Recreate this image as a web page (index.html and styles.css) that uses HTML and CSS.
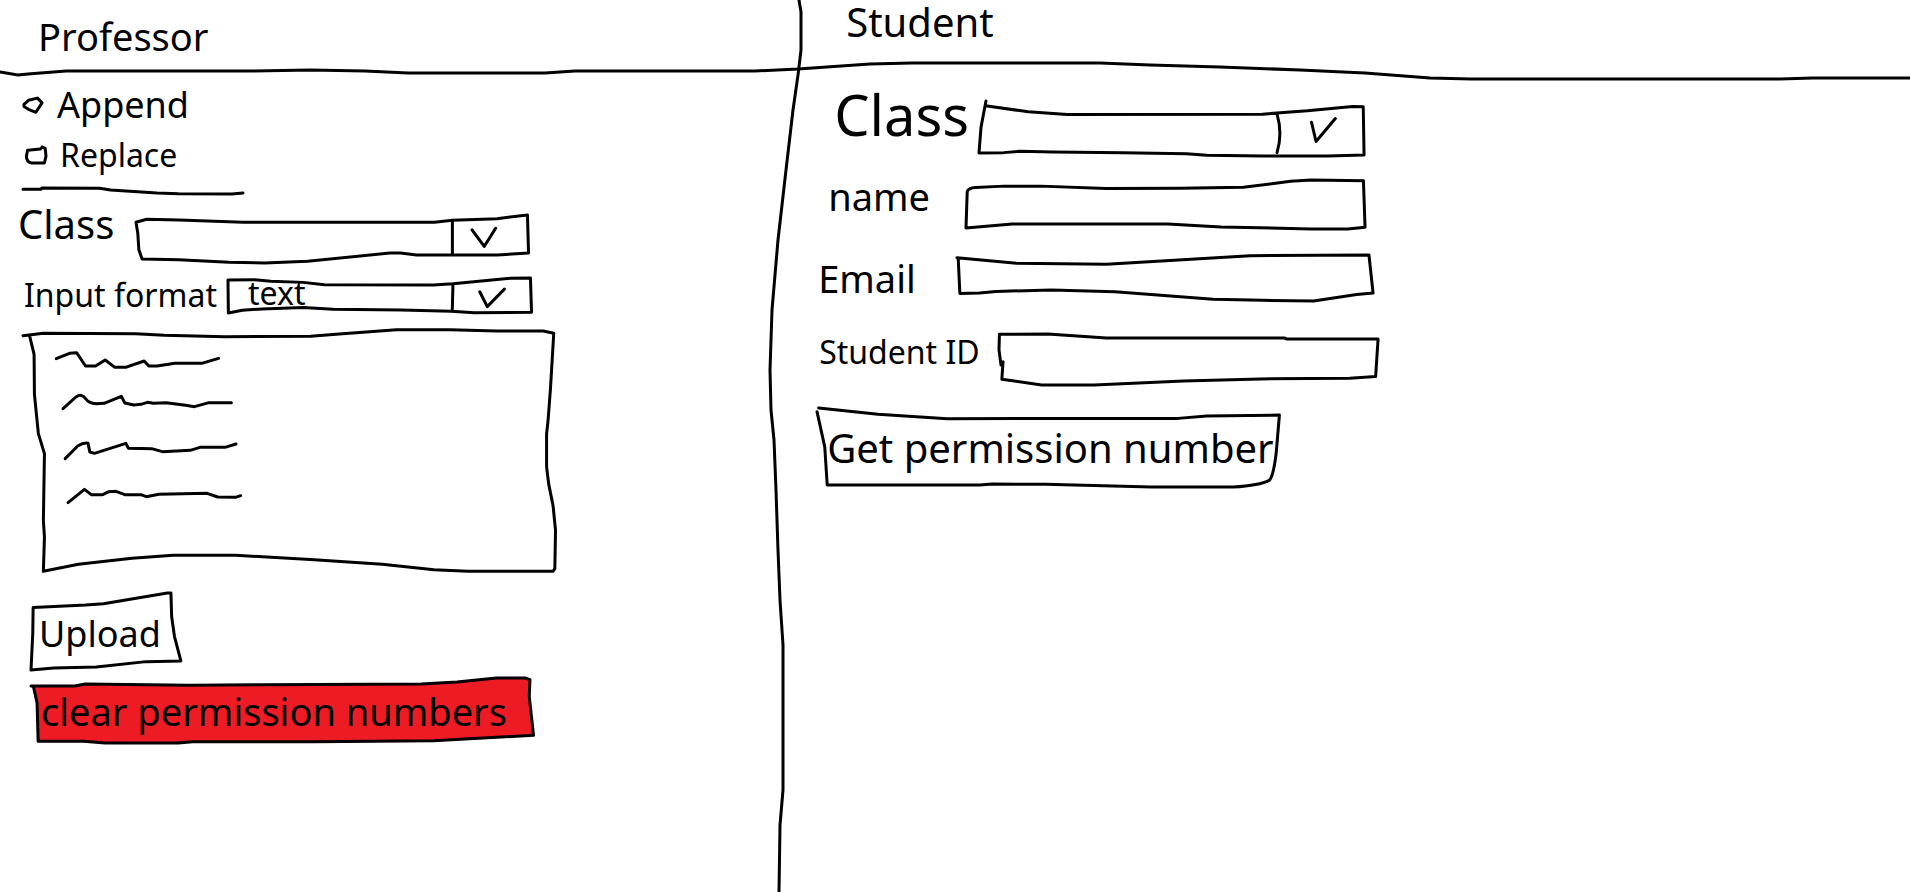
FILE: index.html
```html
<!DOCTYPE html>
<html lang="en">
<head>
<meta charset="utf-8">
<title>Permission numbers</title>
<link rel="stylesheet" href="styles.css">
</head>
<body>
<main class="board">
  <section class="panel">
    <header class="panel-head head-professor"><h1 class="title text-m">Professor</h1></header>
    <form class="form form-professor">
      <div class="choice choice-append">
        <span class="frame radio-frame">
          <input type="radio" name="mode" id="append" class="radio">
          <svg class="ink" viewBox="63 288 62 44" preserveAspectRatio="none" aria-hidden="true"><path d="M66 308 L80 297 L108 291 L122 304 L103 330 L80 322 L66 314Z"/></svg>
        </span>
        <label for="append" class="text-r">Append</label>
      </div>
      <div class="choice choice-replace">
        <span class="frame radio-frame">
          <input type="radio" name="mode" id="replace" class="radio">
          <svg class="ink" viewBox="76 424 50 46" preserveAspectRatio="none" aria-hidden="true"><path d="M112 430 L80 433 L77 450 Q77 468 90 470 L122 470 L126 450 L124 428 L116 424"/></svg>
        </span>
        <label for="replace" class="text-s">Replace</label>
      </div>
      <div class="frame separator">
        <svg class="ink" viewBox="65 565 616 18" preserveAspectRatio="none" aria-hidden="true"><path d="M65 569 L115 569 L118 565 L280 566 L310 571 L440 580 L500 582 L650 583 L681 580"/></svg>
      </div>
      <div class="row row-prof-class">
        <label for="prof-class" class="text-l">Class</label>
        <span class="frame field">
          <select id="prof-class" class="control"><option></option></select>
          <svg class="ink" viewBox="380 75 1098 145" preserveAspectRatio="none" aria-hidden="true"><path d="M380 97 L410 88 L500 90 L680 97 L1215 97 L1265 91 L1390 86 L1475 75 L1478 190 L1390 196 L1165 196 L1120 190 L1090 190 L860 215 L740 220 L640 218 L500 210 L397 208 L388 180 L385 130Z M1265 92 L1265 195 M1320 120 L1354 170 L1386 115"/></svg>
        </span>
      </div>
      <div class="row row-format">
        <label for="format" class="text-s">Input format</label>
        <span class="frame field">
          <select id="format" class="control text-s"><option>text</option></select>
          <svg class="ink" viewBox="640 262 850 104" preserveAspectRatio="none" aria-hidden="true"><path d="M640 268 L715 267 L760 272 L850 275 L910 282 L1215 283 L1270 279 L1430 263 L1487 262 L1490 364 L1330 365 L1265 361 L1125 357 L935 355 L850 350 L735 354 L680 358 L641 366Z M1270 280 L1268 361 M1345 303 L1366 347 L1414 295"/></svg>
        </span>
      </div>
      <div class="frame notes">
        <textarea class="control" aria-label="Permission numbers"></textarea>
        <svg class="ink" viewBox="65 414 1490 729" preserveAspectRatio="none" aria-hidden="true">
          <path d="M65 434 L122 427 L380 428 L460 433 L630 437 L870 436 L950 429 L1110 416 L1260 416 L1390 420 L1520 420 L1550 427 L1541 590 L1534 690 L1530 728 L1530 828 L1536 880 L1548 943 L1555 1018 L1553 1133 L1548 1141 L1310 1141 L1215 1136 L1070 1120 L880 1106 L660 1093 L485 1093 L370 1102 L220 1120 L122 1141 L125 1038 L122 988 L125 788 L108 728 L97 610 L96 490 L84 437"/>
          <path d="M158 503 L195 487 L215 485 L240 525 L268 525 L295 507 L322 529 L352 529 L404 510 L417 525 L440 525 L490 517 L565 517 L612 502"/>
          <path d="M177 653 L213 618 Q230 606 240 623 Q250 638 270 638 L292 637 L340 616 L350 636 L375 642 L395 640 L413 634 L430 637 L465 635 L520 643 L545 647 L585 635 L648 635"/>
          <path d="M183 803 L218 765 Q235 754 247 757 L252 783 L265 787 L353 757 L360 772 L425 773 L455 782 L533 778 L560 769 L630 769 L661 759"/>
          <path d="M191 935 L237 895 L256 911 L288 911 L305 902 L325 901 L350 911 L395 911 L410 917 L445 910 L580 907 L610 918 L660 919 L674 914"/>
        </svg>
      </div>
      <button type="button" class="frame button upload text-r">
        <svg class="ink" viewBox="86 70 422 230" preserveAspectRatio="none" aria-hidden="true"><path d="M92 113 L240 106 L290 102 L470 70 L480 70 L482 140 L490 200 L508 273 L410 275 L270 291 L150 294 L86 300 L91 190Z"/></svg>
        <span class="caption">Upload</span>
      </button>
      <button type="button" class="frame button clear text-m">
        <svg class="ink danger" viewBox="88 325 1406 195" preserveAspectRatio="none" aria-hidden="true"><path d="M88 349 L210 349 L240 343 L530 347 L735 345 L1180 343 L1280 337 L1390 325 L1470 325 L1484 330 L1482 380 L1494 497 L1215 513 L880 516 L540 516 L500 520 L295 520 L235 515 L108 515 L105 400 L95 352"/></svg>
        <span class="caption">clear permission numbers</span>
      </button>
    </form>
  </section>

  <section class="panel">
    <header class="panel-head head-student"><h2 class="title text-l">Student</h2></header>
    <form class="form form-student">
      <div class="row row-class">
        <label for="class" class="text-xl">Class</label>
        <span class="frame field">
          <select id="class" class="control"><option></option></select>
          <svg class="ink" viewBox="540 303 938 163" preserveAspectRatio="none" aria-hidden="true"><path d="M557 303 L545 380 L540 457 L600 456 L640 452 L720 454 L890 456 L1045 459 L1095 464 L1230 466 L1390 466 L1478 463 L1476 320 L1450 319 L1340 332 L1230 342 L755 343 L660 335 L560 318 M1266 341 Q1280 400 1266 456 M1350 366 L1361 423 L1408 355"/></svg>
        </span>
      </div>
      <div class="row row-name">
        <label for="name" class="text-m">name</label>
        <span class="frame field">
          <input type="text" id="name" class="control">
          <svg class="ink" viewBox="507 544 975 144" preserveAspectRatio="none" aria-hidden="true"><path d="M507 685 L510 578 Q513 567 530 566 L600 562 L690 562 L850 569 L1030 568 L1185 565 L1300 548 L1350 544 L1478 546 L1482 683 L1440 688 L1350 688 L1130 682 L1000 673 L620 673Z"/></svg>
        </span>
      </div>
      <div class="row row-email">
        <label for="email" class="text-m">Email</label>
        <span class="frame field">
          <input type="email" id="email" class="control">
          <svg class="ink" viewBox="485 49 1015 134" preserveAspectRatio="none" aria-hidden="true"><path d="M485 57 L630 73 L850 76 L1200 51 L1490 49 L1500 160 L1460 164 L1355 183 L1230 181 L1110 178 L870 156 L715 151 L580 155 L540 160 L492 161 L488 60"/></svg>
        </span>
      </div>
      <div class="row row-id">
        <label for="student-id" class="text-s">Student ID</label>
        <span class="frame field">
          <input type="text" id="student-id" class="control">
          <svg class="ink" viewBox="585 283 935 151" preserveAspectRatio="none" aria-hidden="true"><path d="M586 284 L705 283 L850 295 L1290 295 L1295 298 L1520 298 L1514 409 L1450 414 L1230 416 L1040 422 L820 434 L690 434 L592 417 L595 365 L590 375 L585 330Z"/></svg>
        </span>
      </div>
      <button type="button" class="frame button get text-l">
        <svg class="ink" viewBox="141 504 1132 236" preserveAspectRatio="none" aria-hidden="true"><path d="M145 504 L290 523 L460 536 L1025 535 L1095 528 L1273 525 L1265 640 Q1258 710 1248 720 Q1225 735 1160 740 L960 740 L700 732 L570 731 L540 734 L166 734 L160 620 L141 515"/></svg>
        <span class="caption">Get permission number</span>
      </button>
    </form>
  </section>

  <svg class="ink rule-across" viewBox="0 0 1910 90" preserveAspectRatio="none" aria-hidden="true"><path d="M0 72 L18 75 L28 74 L66 71 L120 71 L250 71 L310 70 L365 71 L408 73 L545 73 L575 71 L755 71 L798 69 L870 64 L912 63 L1100 63 L1150 65 L1220 67 L1300 70 L1365 73 L1430 78 L1471 79 L1780 79 L1813 78 L1910 78"/></svg>
  <svg class="ink rule-down" viewBox="0 0 1910 892" preserveAspectRatio="none" aria-hidden="true"><path d="M799 0 L801 12 L801 50 L798 75 L793 110 L786 170 L778 240 L772 310 L770 370 L771 410 L774 440 L776 490 L778 550 L780 600 L783 645 L783 790 L780 825 L779 892"/></svg>
</main>
</body>
</html>
```
FILE: styles.css
```css
* {
  box-sizing: border-box;
}

body {
  margin: 0;
  background: #fff;
  color: #000;
  font-family: "Noto Sans", sans-serif;
}

.board {
  position: relative;
  display: grid;
  grid-template-columns: 42% 1fr;
  min-height: 100vh;
}

.panel-head {
  height: 72px;
}

.head-professor {
  padding: 14px 38px;
}

.head-student {
  padding: 0 44px;
}

.title {
  margin: 0;
  font-weight: 400;
  line-height: 44px;
}

.text-s { font-size: 32px; }
.text-r { font-size: 36px; }
.text-m { font-size: 38px; }
.text-l { font-size: 40px; }
.text-xl { font-size: 56px; }

/* Hand-drawn outlines stretch with the box they surround */
.frame {
  position: relative;
  display: block;
}

.ink {
  position: absolute;
  top: 0;
  left: 0;
  width: 100%;
  height: 100%;
  overflow: visible;
  pointer-events: none;
}

.ink path {
  fill: none;
  stroke: #000;
  stroke-width: 3px;
  stroke-linecap: round;
  stroke-linejoin: round;
  vector-effect: non-scaling-stroke;
}

.danger path {
  fill: #ed1c24;
}

.rule-across {
  height: 90px;
}

.form {
  display: flex;
  flex-direction: column;
}

.form-professor {
  width: 70%;
  padding-top: 8px;
}

.form-student {
  width: 52%;
  padding-top: 10px;
}

.choice {
  display: flex;
  align-items: center;
  gap: 14px;
  line-height: 50px;
}

.choice-append {
  padding-left: 23px;
}

.choice-replace {
  padding-left: 26px;
}

.radio-frame {
  width: 20px;
  height: 16px;
}

.radio {
  display: block;
  width: 100%;
  height: 100%;
  margin: 0;
  appearance: none;
}

.separator {
  width: 220px;
  height: 6px;
  margin: 8px 0 0 23px;
}

.row {
  display: flex;
  align-items: center;
}

.row label {
  flex: none;
  line-height: 36px;
  white-space: nowrap;
}

.field {
  display: flex;
  flex: 1;
  align-items: center;
}

.control {
  display: block;
  width: 100%;
  height: 100%;
  margin: 0;
  padding: 0 20px;
  border: 0;
  background: transparent;
  color: #000;
  font-family: inherit;
  appearance: none;
  resize: none;
  outline: none;
}

.row-prof-class {
  align-items: flex-start;
  margin-top: 8px;
  padding: 0 33px 0 18px;
}

.row-prof-class label {
  width: 118px;
  line-height: 44px;
}

.row-prof-class .field {
  height: 48px;
  margin-top: 13px;
}

.row-format {
  margin-top: 14px;
  padding: 0 30px 0 24px;
}

.row-format label {
  width: 204px;
}

.row-format .field {
  height: 35px;
}

.row-format .control {
  flex: none;
  height: 48px;
  padding-bottom: 6px;
}

.notes {
  height: 243px;
  margin: 16px 6px 0 23px;
}

.button {
  padding: 0;
  border: 0;
  background: transparent;
  color: #000;
  font-family: inherit;
  text-align: left;
  white-space: nowrap;
}

.caption {
  position: relative;
}

.upload {
  align-self: flex-start;
  height: 77px;
  margin: 21px 0 0 31px;
  padding: 4px 20px 0 8px;
}

.clear {
  height: 65px;
  margin: 8px 28px 0 31px;
  padding: 0 10px;
}

.row-class {
  align-items: flex-start;
  padding: 0 14px 0 32px;
}

.row-class label {
  width: 145px;
  line-height: 64px;
}

.row-class .field {
  height: 55px;
  margin-top: 19px;
}

.row-name {
  align-items: flex-start;
  margin-top: 20px;
  padding: 0 13px 0 26px;
}

.row-name label {
  width: 138px;
  line-height: 40px;
}

.row-name .field {
  height: 49px;
  margin-top: 4px;
}

.row-email {
  margin-top: 26px;
  padding: 0 5px 0 16px;
}

.row-email label {
  width: 139px;
}

.row-email .field {
  height: 46px;
}

.row-id {
  align-items: flex-start;
  margin-top: 33px;
  padding-left: 17px;
}

.row-id label {
  width: 180px;
}

.row-id .field {
  height: 51px;
}

.get {
  align-self: flex-start;
  height: 79px;
  margin: 23px 0 0 15px;
  padding: 0 6px 0 10px;
}
```
